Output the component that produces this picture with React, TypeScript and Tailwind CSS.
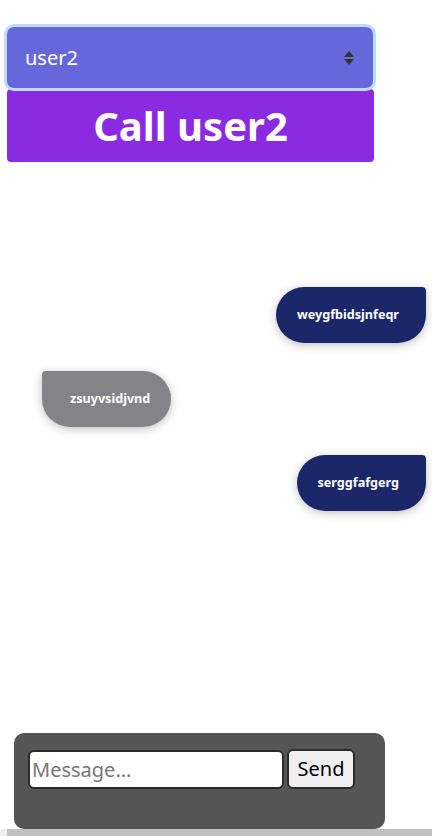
import React, { useState } from 'react';

type Msg = { id: number; text: string; mine: boolean };

const messages: Msg[] = [
  { id: 1, text: 'weygfbidsjnfeqr', mine: true },
  { id: 2, text: 'zsuyvsidjvnd', mine: false },
  { id: 3, text: 'serggfafgerg', mine: true },
];

const font = { fontFamily: '"Noto Sans", "Open Sans", sans-serif' };

export default function App() {
  const [user, setUser] = useState('user2');
  const [draft, setDraft] = useState('');

  return (
    <div className="flex h-[836px] w-[432px] flex-col overflow-hidden bg-white" style={font}>
      {/* Header: user picker + call button */}
      <div className="ml-[7px] mt-[27px] w-[366px]">
        <div className="relative rounded-[7px] bg-[#6767dc] ring-[3px] ring-[#bcdcfa]">
          <select
            value={user}
            onChange={e => setUser(e.target.value)}
            className="h-[61px] w-full appearance-none bg-transparent pl-[18px] text-[20px] text-white outline-none"
          >
            <option value="user1">user1</option>
            <option value="user2">user2</option>
          </select>
          <svg className="pointer-events-none absolute right-[19px] top-[24px]" width="10" height="14" viewBox="0 0 10 14">
            <path d="M5 0 L10 6 L0 6 Z" fill="#333" />
            <path d="M0 8 L10 8 L5 14 Z" fill="#333" />
          </svg>
        </div>
        <button className="mt-[1px] flex h-[73px] w-[367px] items-center justify-center rounded-[4px] bg-[#8a2be2] text-[40px] font-bold text-white">
          Call {user}
        </button>
      </div>

      {/* Messages */}
      <div className="flex flex-1 flex-col pt-[125px]">
        {messages.map(m => (
          <div
            key={m.id}
            className={`mb-[28px] flex h-[56px] items-center text-[12.6px] font-bold text-white shadow-[0_2px_10px_rgba(0,0,0,0.25)] ${
              m.mine
                ? 'mr-[6px] self-end rounded-[28px] rounded-tr-[4px] bg-[#1b2768] pl-[21px] pr-[27px]'
                : 'ml-[42px] self-start rounded-[28px] rounded-tl-[4px] bg-[#848487] pl-[28px] pr-[21px]'
            }`}
          >
            {m.text}
          </div>
        ))}
      </div>

      {/* Composer */}
      <div className="ml-[14px] h-[96px] w-[371px] rounded-[10px] bg-[#555555] px-[14px] pt-[16px]">
        <div className="flex items-center gap-[3px]">
          <input
            value={draft}
            onChange={e => setDraft(e.target.value)}
            placeholder="Message..."
            className="h-[39px] w-[256px] rounded-[6px] border-2 border-[#2a2a2a] bg-white px-[2px] text-[20px] text-black outline-none placeholder:text-[#777]"
          />
          <button className="h-[40px] w-[68px] rounded-[6px] border-2 border-[#2a2a2a] bg-[#efefef] text-[20px] text-black">
            Send
          </button>
        </div>
      </div>

      {/* horizontal scrollbar strip */}
      <div className="h-[7px] bg-[#f0f0f0] pl-[7px]">
        <div className="h-full w-full bg-[#c1c1c1]" />
      </div>
    </div>
  );
}
